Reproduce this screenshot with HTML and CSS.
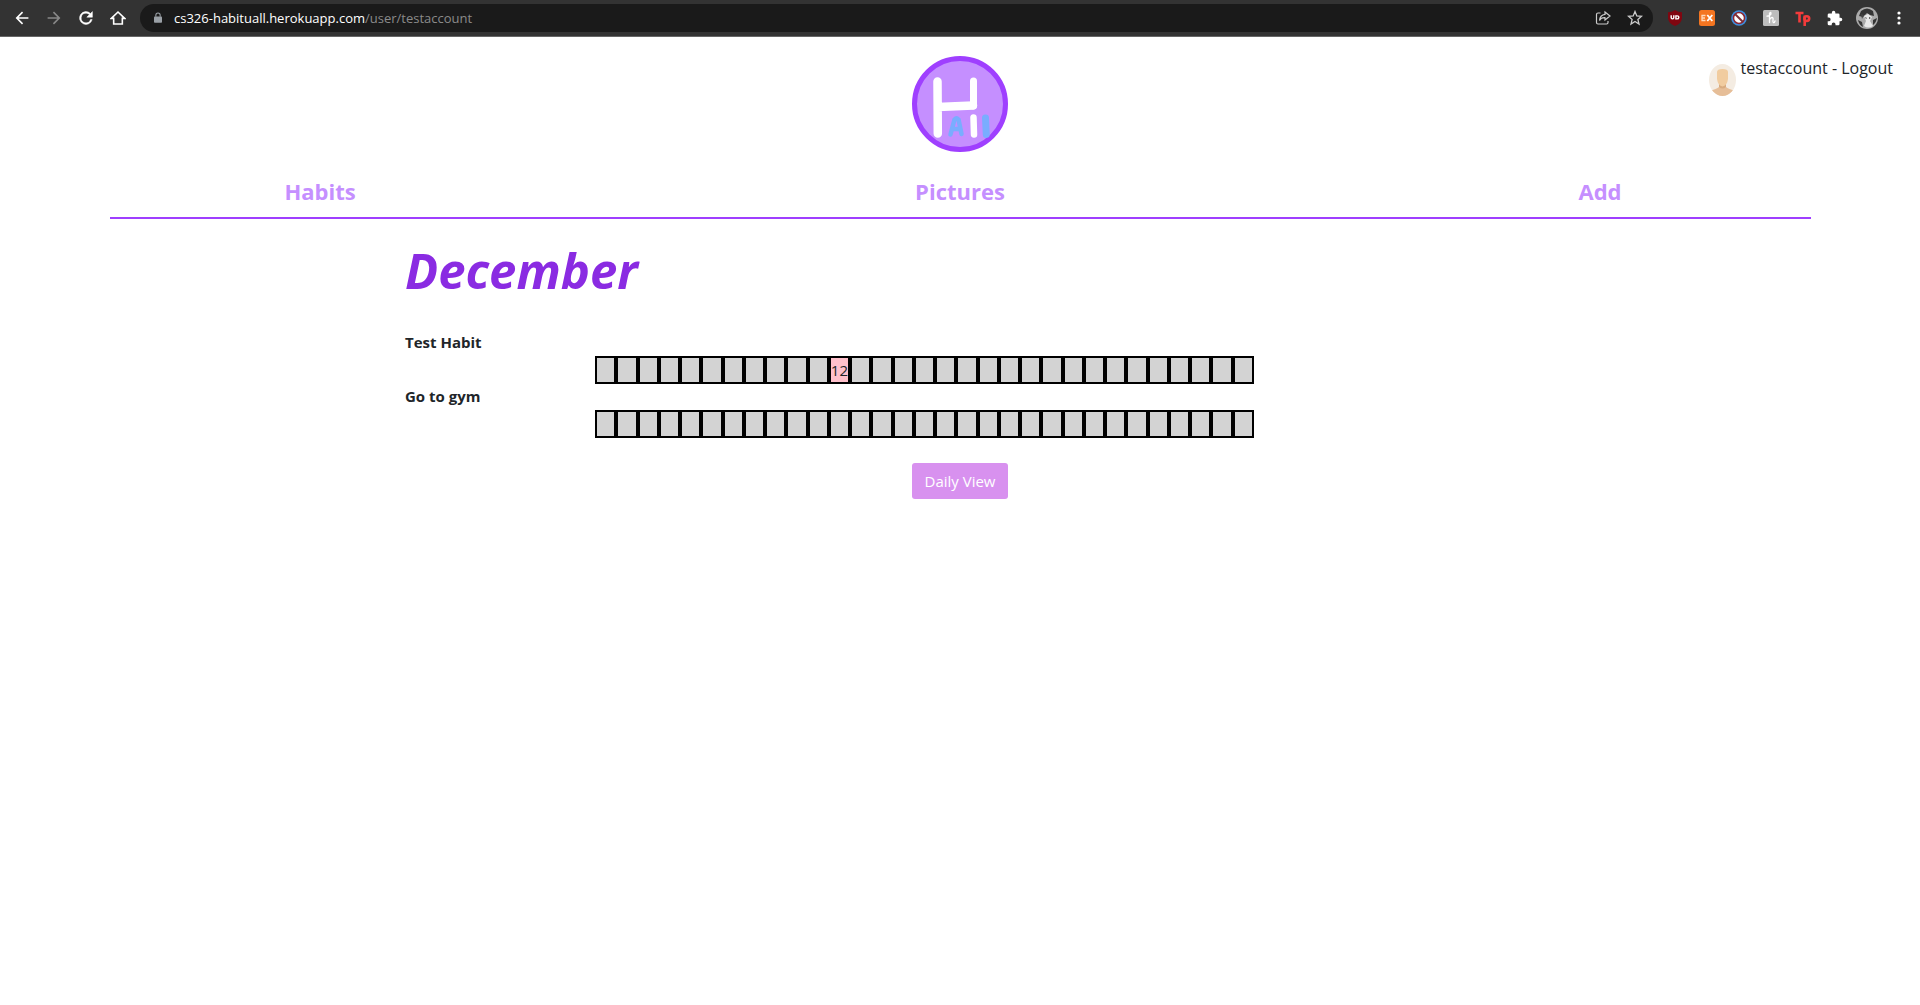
FILE: index.html
```html
<!DOCTYPE html>
<html lang="en">
<head>
<meta charset="utf-8">
<title>Habituall</title>
<link rel="stylesheet" href="styles.css">
</head>
<body>
<header class="toolbar">
  <div class="nav-buttons">
    <button class="tool" aria-label="Back"><svg viewBox="2 2 20 20"><path d="M20 11H7.800l5.600-5.600L12 4l-8 8 8 8 1.400-1.400L7.800 13H20z"/></svg></button>
    <button class="tool dim" aria-label="Forward"><svg viewBox="2 2 20 20"><path d="M12 4l-1.400 1.400L16.200 11H4v2h12.200l-5.600 5.600L12 20l8-8z"/></svg></button>
    <button class="tool" aria-label="Reload"><svg viewBox="2 2 20 20"><path stroke="currentColor" stroke-width=".6" d="M17.650 6.350A8 8 0 1 0 19.730 14h-2.080A6 6 0 1 1 12 6c1.660 0 3.140.690 4.220 1.780L13 11h7V4z"/></svg></button>
    <button class="tool" aria-label="Home"><svg viewBox="0 0 24 24"><path fill="none" stroke="currentColor" stroke-width="2.400" d="M2 12.500 12 3l10 9.500h-3.500V21h-13v-8.500z"/></svg></button>
  </div>
  <div class="address">
    <svg class="lock" viewBox="0 0 10 14"><path d="M1 5h8q1 0 1 1v6q0 1-1 1H1q-1 0-1-1V6q0-1 1-1z"/><path fill="none" stroke="currentColor" stroke-width="1.300" d="M2.300 5.500V3.500a2.700 2.700 0 0 1 5.400 0v2"/></svg>
    <p class="url">cs326-habituall.herokuapp.com<span class="path">/user/testaccount</span></p>
    <button class="tool small" aria-label="Share"><svg viewBox="0 0 16 16" fill="none" stroke="currentColor" stroke-width="1.200"><path d="M5.500 3H3Q1.500 3 1.500 4.500v8Q1.500 14 3 14h8.500Q13 14 13 12.500V11M10 2l5 4-5 4V7.700Q6 7.500 4.500 10.500 5 5 10 4.400z"/></svg></button>
    <button class="tool small" aria-label="Bookmark"><svg viewBox="0 0 16 16" fill="none" stroke="currentColor" stroke-width="1.300"><path d="m8 1.500 1.800 4.400 4.700.4-3.600 3.100 1.100 4.600L8 11.500 4 14l1.100-4.600-3.600-3.100 4.700-.4z"/></svg></button>
  </div>
  <div class="extensions">
    <button class="tool" aria-label="uBlock"><svg viewBox="0 0 16 16"><path fill="#800610" d="M8 0q3 2.200 7 2.200V8q0 5-7 8-7-3-7-8V2.200Q5 2.200 8 0z"/><path fill="none" stroke="#fff" stroke-width="1.400" d="M4.200 5.200v2.600q0 1.100 1.300 1.100t1.300-1.100V5.200M8.900 5.900v3h1.200q1.700 0 1.700-1.500T10.100 5.900z"/></svg></button>
    <button class="tool" aria-label="Experience"><svg viewBox="0 0 16 16"><rect width="16" height="16" rx="2.500" fill="#f47521"/><path fill="none" stroke="#ffd9bb" stroke-width="1.300" d="M6.500 5.500H3v5h3.500M3 8h3"/><path stroke="#fff" stroke-width="1.800" d="m8.300 5 5 6m0-6-5 6"/></svg></button>
    <button class="tool" aria-label="Blocker"><svg viewBox="0 0 16 16"><circle cx="8" cy="8" r="7.800" fill="#3e8ede"/><circle cx="8" cy="8" r="5.500" fill="#fff" stroke="#8c2632" stroke-width="1.500"/><path stroke="#7c3038" stroke-width="2" d="m4 4 8 8"/></svg></button>
    <button class="tool" aria-label="Honey"><svg viewBox="0 0 16 16"><rect width="16" height="16" rx="1.500" fill="#bdbdbd"/><path fill="none" stroke="#fff" stroke-width="1.300" stroke-linecap="round" d="M4 6.200Q8 5.500 8 3.500T6.500 3.500V12.500M6.700 9.500q2-3 3.200-1.500c.8 1-.8 4.500.4 4.700Q11.500 12.800 12 11"/></svg></button>
    <button class="tool" aria-label="Picker"><svg viewBox="0 0 16 16" fill="none" stroke="#f33b3b" stroke-width="2.600"><path d="M.5 3h8M4.500 3v9.500M9.700 5.500V16"/><circle cx="11.800" cy="8.600" r="2.400"/></svg></button>
    <button class="tool" aria-label="Extensions"><svg viewBox="1 0 23 23"><path d="M20.500 11H19V7a2 2 0 0 0-2-2h-4V3.500a2.500 2.500 0 0 0-5 0V5H4a2 2 0 0 0-2 2v3.800h1.500a2.700 2.700 0 0 1 0 5.400H2V20a2 2 0 0 0 2 2h3.800v-1.500a2.700 2.700 0 0 1 5.400 0V22H17a2 2 0 0 0 2-2v-4h1.500a2.500 2.500 0 0 0 0-5z"/></svg></button>
    <button class="tool profile" aria-label="Profile"><svg viewBox="0 0 22 22"><circle cx="11" cy="11" r="11" fill="#aaa"/><path fill="#353535" d="M5 4q6-5 12 0l1 5-4-1-3-2-4 4-4-1zM2 13l4 2 1 5q-4-2-5-7zM17 13l4-2q-1 5-4 7z"/><path fill="#e8e8e8" d="m8 9 4-2 4 3-2 4 3 5q-5 3-9 0l2-5z"/><path fill="#444" d="m9 10 2 1-1 1zM13 10l2 1-2 1zM5 7l3 1-2 4z"/></svg></button>
    <button class="tool" aria-label="Menu"><svg viewBox="0 0 16 16"><circle cx="8" cy="3" r="1.600"/><circle cx="8" cy="8" r="1.600"/><circle cx="8" cy="13" r="1.600"/></svg></button>
  </div>
</header>
<main>
  <div class="masthead">
    <svg class="logo" viewBox="0 0 96 96" role="img" aria-label="Habituall">
      <circle cx="48" cy="48" r="45.500" fill="#c58fff" stroke="#9f3fff" stroke-width="5"/>
      <g fill="none" stroke-linecap="round" stroke-linejoin="round">
        <path stroke="#fff" stroke-width="8.500" d="m25.500 25.500.3 52M26 51l35-1.500"/>
        <path stroke="#fff" stroke-width="7" d="M61.500 25v25"/>
        <path stroke="#fff" stroke-width="6.500" d="m61.500 61.500.5 17"/>
        <path stroke="#79adff" stroke-width="4.500" d="m38.500 78.500 4-15q2-2 4 0l3 14.500M41 73h7"/>
        <path stroke="#79adff" stroke-width="7" d="m73.500 62 .8 16.500"/>
      </g>
    </svg>
    <div class="account">
      <svg class="avatar" viewBox="0 0 27 32" aria-hidden="true"><defs><clipPath id="oval"><ellipse cx="13.500" cy="16" rx="13.500" ry="16"/></clipPath></defs><g clip-path="url(#oval)"><path fill="#f4ece2" d="M0 0h27v32H0z"/><path fill="#e6be98" d="M0 27q8-2 10-4h7q2 2 10 4v5H0z"/><path fill="#d8ac80" d="M10 20h7v3q-3.500 3-7 0z"/><path fill="#f1cc9f" d="M8 8q0-3 5.500-3T19 8v7q-1 7-5.500 7.500Q9 22 8 15z"/></g></svg>
      <p class="who">testaccount - <a href="#">Logout</a></p>
    </div>
  </div>
  <nav class="menu">
    <a href="#">Habits</a>
    <a href="#">Pictures</a>
    <a href="#">Add</a>
  </nav>
  <hr class="rule">
  <section class="content">
    <h1>December</h1>
    <section class="habit">
      <h2>Test Habit</h2>
      <ol class="days"><li></li><li></li><li></li><li></li><li></li><li></li><li></li><li></li><li></li><li></li><li></li><li class="done">12</li><li></li><li></li><li></li><li></li><li></li><li></li><li></li><li></li><li></li><li></li><li></li><li></li><li></li><li></li><li></li><li></li><li></li><li></li><li></li></ol>
    </section>
    <section class="habit">
      <h2>Go to gym</h2>
      <ol class="days"><li></li><li></li><li></li><li></li><li></li><li></li><li></li><li></li><li></li><li></li><li></li><li></li><li></li><li></li><li></li><li></li><li></li><li></li><li></li><li></li><li></li><li></li><li></li><li></li><li></li><li></li><li></li><li></li><li></li><li></li><li></li></ol>
    </section>
    <button class="daily">Daily View</button>
  </section>
</main>
</body>
</html>
```
FILE: styles.css
```css
* { box-sizing: border-box; }

body {
  margin: 0;
  background: #fff;
  color: #212529;
  font: 15px/24px "Open Sans", "Noto Sans", sans-serif;
}

h1, h2, p, ol { margin: 0; padding: 0; }
a { color: inherit; text-decoration: none; }
button { border: 0; padding: 0; font: inherit; cursor: pointer; }

/* Browser toolbar */
.toolbar {
  display: flex;
  align-items: center;
  height: 37px;
  padding: 0 13px 0 14px;
  border-bottom: 1px solid #666;
  background: #333;
}
.tool {
  display: flex;
  flex: none;
  width: 16px;
  height: 16px;
  background: none;
  color: #fff;
}
.tool svg { display: block; width: 100%; height: 100%; }
.tool svg:not([fill]) { fill: currentColor; }
.tool.dim { color: #888; }
.tool.small { color: #ccc; }
.nav-buttons { display: flex; gap: 16px; margin-right: 14px; }
.address {
  display: flex;
  flex: 1;
  align-items: center;
  gap: 16px;
  height: 28px;
  padding: 0 10px 0 14px;
  border-radius: 14px;
  background: #1a1a1a;
}
.lock { width: 8px; height: 12px; margin-right: -4px; fill: #9aa0a6; color: #9aa0a6; }
.url { flex: 1; color: #fff; font-size: 13px; line-height: 20px; }
.path { color: #8a8a8a; }
.extensions { display: flex; align-items: center; gap: 16px; margin-left: 14px; }
.profile { width: 22px; height: 22px; margin: 0 -3px; }

/* Logo, account and menu */
.masthead {
  display: grid;
  grid-template-columns: 1fr auto 1fr;
  padding: 19px 27px 0;
}
.logo { grid-column: 2; width: 96px; height: 96px; }
.account {
  display: flex;
  justify-content: flex-end;
  align-items: flex-start;
  gap: 5px;
}
.avatar { width: 27px; height: 32px; margin-top: 8px; }
.who { font-size: 16px; }
.menu {
  display: grid;
  grid-template-columns: repeat(3, 1fr);
  padding: 21px 0 8px;
  color: #c58fff;
  font-size: 22px;
  font-weight: 700;
  line-height: 36px;
  text-align: center;
}
.rule { height: 2px; margin: 0 109px 0 110px; border: 0; background: #9f3fff; }

/* Month view */
.content { max-width: 1110px; margin: 0 auto; }
h1 {
  padding: 21px 0 32px;
  color: #8a2be2;
  font-size: 49px;
  font-style: italic;
  font-weight: 700;
  line-height: 60px;
}
h2 { padding-bottom: 4px; font-size: 15px; line-height: 20px; }
.habit { padding-bottom: 2px; }
.days {
  display: grid;
  grid-template-columns: repeat(31, 1fr);
  width: 659px;
  margin-left: 190px;
  list-style: none;
}
.days li {
  height: 28px;
  border: 2px solid #000;
  background: #d3d3d3;
  white-space: nowrap;
}
.days .done { background: #ffc0cb; }
.daily {
  display: block;
  width: 96px;
  height: 36px;
  margin: 23px auto;
  border-radius: 3px;
  background: #d891ef;
  color: #fff;
}
```
